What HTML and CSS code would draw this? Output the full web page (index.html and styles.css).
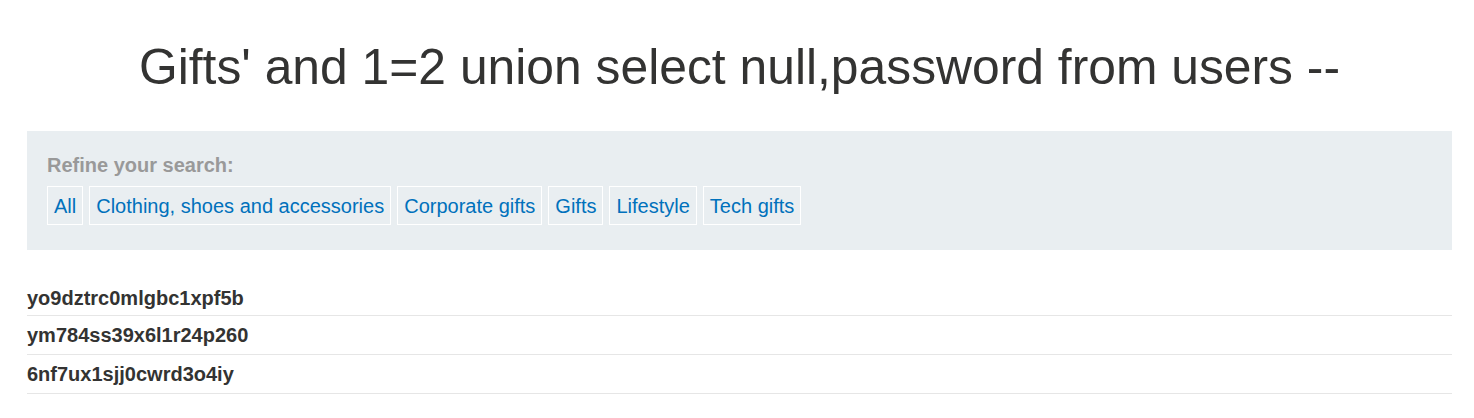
FILE: index.html
```html
<!DOCTYPE html>
<html>
<head>
<meta charset="utf-8">
<link rel="stylesheet" href="styles.css">
</head>
<body>
<div class="container">
  <h1 class="title">Gifts' and 1=2 union select null,password from users --</h1>
  <section class="filter">
    <p class="filter-label">Refine your search:</p>
    <div class="filter-links">
      <a class="filter-link" href="#">All</a>
      <a class="filter-link" href="#">Clothing, shoes and accessories</a>
      <a class="filter-link" href="#">Corporate gifts</a>
      <a class="filter-link" href="#">Gifts</a>
      <a class="filter-link" href="#">Lifestyle</a>
      <a class="filter-link" href="#">Tech gifts</a>
    </div>
  </section>
  <table class="results">
    <tbody>
      <tr><th>yo9dztrc0mlgbc1xpf5b</th></tr>
      <tr><th>ym784ss39x6l1r24p260</th></tr>
      <tr><th>6nf7ux1sjj0cwrd3o4iy</th></tr>
    </tbody>
  </table>
</div>
</body>
</html>
```
FILE: styles.css
```css
html, body {
  margin: 0;
  padding: 0;
  background: #fff;
}
body {
  font-family: "Liberation Sans", Arial, sans-serif;
  color: #333332;
}
.container {
  padding: 0 22px 0 27px;
}
.title {
  margin: 0;
  padding-top: 38px;
  height: 131px;
  box-sizing: border-box;
  text-align: center;
  font-weight: normal;
  font-size: 49.8px;
  line-height: 58px;
  color: #333332;
}
.filter {
  background: #e9eef1;
  padding: 20px 20px 24px 20px;
  height: 119px;
  box-sizing: border-box;
}
.filter-label {
  margin: 0 0 7px 0;
  font-size: 20px;
  font-weight: bold;
  line-height: 28px;
  color: #999999;
}
.filter-links {
  display: flex;
  flex-wrap: wrap;
  gap: 6px;
}
.filter-link {
  display: block;
  border: 1px solid #ffffff;
  padding: 1px 6px 0 6px;
  height: 39px;
  box-sizing: border-box;
  line-height: 37px;
  font-size: 20px;
  color: #0071bc;
  text-decoration: none;
  overflow: hidden;
}
.results {
  width: 100%;
  border-collapse: collapse;
  margin-top: 37px;
}
.results th {
  text-align: left;
  vertical-align: top;
  padding: 8px 0 0 0;
  height: 39px;
  box-sizing: border-box;
  font-size: 20px;
  font-weight: bold;
  line-height: 23px;
  border-bottom: 1px solid #e6e6e6;
  color: #333332;
}
.results tr:first-child th {
  height: 28px;
  padding-top: 0;
  line-height: 22px;
}
```
